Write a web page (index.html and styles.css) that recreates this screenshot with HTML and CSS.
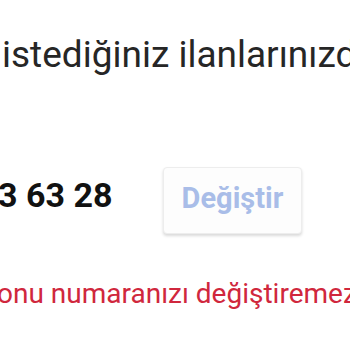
FILE: index.html
```html
<!DOCTYPE html>
<html lang="tr">
<head>
  <meta charset="UTF-8" />
  <title>Telefon</title>
  <link rel="stylesheet" href="styles.css">
</head>
<body>
  <p class="intro">istediğiniz ilanlarınızda gösterebilirsiniz.</p>
  <div class="phone-row">
    <span class="phone">3 63 28</span>
    <button class="change-btn" disabled>Değiştir</button>
  </div>
  <p class="warning">onu numaranızı değiştiremezsiniz.</p>
</body>
</html>
```

FILE: styles.css
```css
html, body {
  overflow: hidden;
}
body {
  margin: 0;
  width: 350px;
  height: 350px;
  background-color: #fff;
  font-family: Roboto, "Open Sans", sans-serif;
  color: #222;
  white-space: nowrap;
}
.intro {
  margin: 33px 0 0 2px;
  font-size: 37px;
  line-height: normal;
  color: #262626;
}
.phone-row {
  display: flex;
  align-items: flex-start;
  margin-top: 91px;
}
.phone {
  flex: 0 0 165px;
  margin: 8px 0 0 -2px;
  font-size: 34px;
  line-height: normal;
  font-weight: bold;
  color: #111;
}
.change-btn {
  flex: 0 0 139px;
  height: 67px;
  padding: 0 0 6px;
  font-family: inherit;
  font-size: 29px;
  font-weight: bold;
  color: #a9bde8;
  background-color: #fdfdfd;
  border: 1px solid #ededed;
  border-radius: 4px;
  box-shadow: 0 2px 3px rgba(0, 0, 0, 0.15);
}
.warning {
  margin: 43px 0 0 -3px;
  font-size: 28px;
  line-height: normal;
  color: #d0273d;
}
```
